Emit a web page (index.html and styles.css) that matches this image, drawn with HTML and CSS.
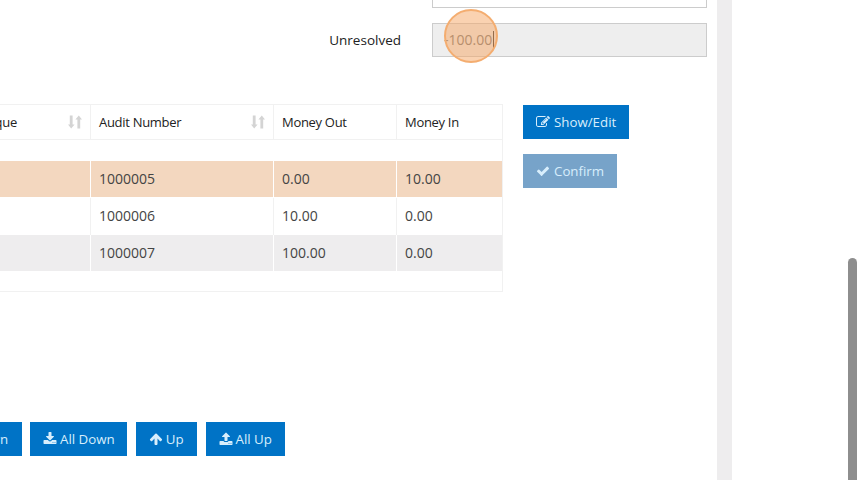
FILE: index.html
```html
<!DOCTYPE html>
<html lang="en">
<head>
<meta charset="utf-8">
<title>Reconciliation</title>
<link rel="stylesheet" href="styles.css">
</head>
<body>
<svg class="defs" width="0" height="0" aria-hidden="true">
  <symbol id="i-edit" viewBox="0 0 1792 1792"><path d="M888 1184l116-116-152-152-116 116v56h96v96h56zm440-720q-16-16-33 1l-350 350q-17 17-1 33t33-1l350-350q17-17 1-33zm80 594v190q0 119-84.500 203.500t-203.500 84.500h-832q-119 0-203.500-84.500t-84.500-203.500v-832q0-119 84.500-203.500t203.500-84.500h832q63 0 117 25 15 7 18 23 3 17-9 29l-49 49q-14 14-32 8-23-6-45-6h-832q-66 0-113 47t-47 113v832q0 66 47 113t113 47h832q66 0 113-47t47-113v-126q0-13 9-22l64-64q15-15 35-7t20 29zm-96-738l288 288-672 672h-288v-288zm444 132l-92 92-288-288 92-92q28-28 68-28t68 28l152 152q28 28 28 68t-28 68z"/></symbol>
  <symbol id="i-check" viewBox="0 0 1792 1792"><path d="M1671 566q0 40-28 68l-724 724-136 136q-28 28-68 28t-68-28l-136-136-362-362q-28-28-28-68t28-68l136-136q28-28 68-28t68 28l294 295 656-657q28-28 68-28t68 28l136 136q28 28 28 68z"/></symbol>
  <symbol id="i-down" viewBox="0 0 1792 1792"><path d="M1344 1344q0-26-19-45t-45-19-45 19-19 45 19 45 45 19 45-19 19-45zm256 0q0-26-19-45t-45-19-45 19-19 45 19 45 45 19 45-19 19-45zm128-224v320q0 40-28 68t-68 28h-1472q-40 0-68-28t-28-68v-320q0-40 28-68t68-28h465l135 136q58 56 136 56t136-56l136-136h464q40 0 68 28t28 68zm-325-569q17 41-14 70l-448 448q-18 19-45 19t-45-19l-448-448q-31-29-14-70 17-39 59-39h256v-448q0-26 19-45t45-19h256q26 0 45 19t19 45v448h256q42 0 59 39z"/></symbol>
  <symbol id="i-arrow-down" viewBox="0 0 1792 1792"><path d="M1675 832q0 53-37 90l-651 652q-39 37-91 37-53 0-90-37l-651-652q-38-36-38-90 0-53 38-91l74-75q39-37 91-37 53 0 90 37l294 294v-704q0-52 38-90t90-38h128q52 0 90 38t38 90v704l294-294q37-37 90-37 52 0 91 37l75 75q37 39 37 91z"/></symbol>
  <symbol id="i-arrow-up" viewBox="0 0 1792 1792"><path d="M1675 971q0 51-37 90l-75 75q-38 38-91 38-54 0-90-38l-294-293v704q0 52-37.500 84.500t-90.500 32.500h-128q-53 0-90.500-32.500t-37.500-84.500v-704l-294 293q-36 38-90 38t-90-38l-75-75q-38-38-38-90 0-53 38-91l651-651q35-37 90-37 54 0 91 37l651 651q37 39 37 91z"/></symbol>
  <symbol id="i-up" viewBox="0 0 1792 1792"><path d="M1344 1472q0-26-19-45t-45-19-45 19-19 45 19 45 45 19 45-19 19-45zm256 0q0-26-19-45t-45-19-45 19-19 45 19 45 45 19 45-19 19-45zm128-224v320q0 40-28 68t-68 28h-1472q-40 0-68-28t-28-68v-320q0-40 28-68t68-28h427q21 56 70.500 92t110.500 36h256q61 0 110.500-36t70.500-92h427q40 0 68 28t28 68zm-325-648q-17 40-59 40h-256v448q0 26-19 45t-45 19h-256q-26 0-45-19t-19-45v-448h-256q-42 0-59-40-17-39 14-69l448-448q18-19 45-19t45 19l448 448q31 30 14 69z"/></symbol>
  <symbol id="i-sort" viewBox="0 0 14 14"><path d="M1.800 0.500h2.800v9H6.600L3.200 13.500 0 9.500h1.800zM9.400 13.500v-9H7.400L10.800 0.500 14 4.500h-1.800v9z"/></symbol>
</svg>

<div class="page">
  <main class="panel">
    <div class="field field-first">
      <div class="input"></div>
    </div>
    <div class="field">
      <label class="field-label">Unresolved</label>
      <div class="input input-readonly">
        <span class="input-value">-100.00</span><span class="caret"></span>
        <span class="pulse"></span>
      </div>
    </div>

    <div class="table-row">
      <table class="grid">
        <colgroup>
          <col class="c-cheque"><col class="c-audit"><col class="c-out"><col class="c-in">
        </colgroup>
        <thead>
          <tr>
            <th><span class="th-inner">Cheque<svg class="sort"><use href="#i-sort"/></svg></span></th>
            <th><span class="th-inner">Audit Number<svg class="sort"><use href="#i-sort"/></svg></span></th>
            <th>Money Out</th>
            <th>Money In</th>
          </tr>
        </thead>
        <tbody>
          <tr class="spacer-top"><td colspan="4"></td></tr>
          <tr class="selected"><td></td><td>1000005</td><td>0.00</td><td>10.00</td></tr>
          <tr class="plain"><td></td><td>1000006</td><td>10.00</td><td>0.00</td></tr>
          <tr class="striped"><td></td><td>1000007</td><td>100.00</td><td>0.00</td></tr>
          <tr class="spacer-bottom"><td colspan="4"></td></tr>
        </tbody>
      </table>
      <div class="side-actions">
        <button class="btn" type="button"><svg class="icon"><use href="#i-edit"/></svg>Show/Edit</button>
        <button class="btn btn-muted" type="button"><svg class="icon"><use href="#i-check"/></svg>Confirm</button>
      </div>
    </div>

    <div class="move-actions">
      <button class="btn btn-m1" type="button"><svg class="icon"><use href="#i-arrow-down"/></svg>Down</button>
      <button class="btn btn-tight" type="button"><svg class="icon"><use href="#i-down"/></svg>All Down</button>
      <button class="btn" type="button"><svg class="icon"><use href="#i-arrow-up"/></svg>Up</button>
      <button class="btn" type="button"><svg class="icon"><use href="#i-up"/></svg>All Up</button>
    </div>
  </main>
  <div class="gutter"></div>
  <aside class="rail"><div class="scroll-thumb"></div></aside>
</div>
</body>
</html>
```
FILE: styles.css
```css
* { box-sizing: border-box; }
html, body { margin: 0; height: 480px; overflow: hidden; background: #fff; }
body { font-family: "Open Sans", sans-serif; font-size: 13.5px; color: #222; }
.defs { position: absolute; }

.page { display: flex; height: 480px; }
.panel { width: 717px; height: 480px; overflow: hidden; background: #fff; }
.gutter { width: 15px; background: #eeedee; }
.rail { flex: 1; display: flex; justify-content: flex-end; align-items: flex-start; padding-right: 3px; padding-top: 258px; background: #fff; }
.scroll-thumb { width: 9px; height: 240px; background: #8e8e8e; border-radius: 5px 5px 0 0; }

.field { display: flex; justify-content: flex-end; align-items: center; padding-right: 10px; margin-top: 15px; }
.field-first { margin-top: -26px; }
.field-label { margin-right: 31px; margin-bottom: 1px; font-size: 13.5px; color: #222; }
.input { position: relative; width: 275px; height: 34px; border: 1px solid #ccc; background: #fff; padding: 0 0 1px 11px; display: flex; align-items: center; }
.input-readonly { background: #eee; color: #777; font-size: 14px; }
.caret { width: 1px; height: 18px; background: #333; margin-left: 1px; }
.pulse { position: absolute; left: 11px; top: -15px; width: 54px; height: 54px; border-radius: 50%; background: rgba(245, 165, 100, 0.5); border: 2px solid #f4ad70; }

.table-row { display: flex; align-items: flex-start; margin-top: 47px; margin-left: -37px; }
.grid { width: 540px; flex: none; table-layout: fixed; border-collapse: separate; border-spacing: 0; border: 1px solid #f1f1f1; font-size: 14px; }
.c-cheque { width: 127px; }
.c-audit { width: 183px; }
.c-out { width: 123px; }
.c-in { width: 105px; }
.grid th { height: 35px; padding: 0 8px; font-size: 13px; letter-spacing: -0.3px; font-weight: 400; text-align: left; color: #222; border-right: 1px solid #f1f1f1; border-bottom: 1px solid #f1f1f1; }
.grid th:last-child, .grid td:last-child { border-right: 0; }
.th-inner { display: flex; justify-content: space-between; align-items: center; }
.sort { width: 14px; height: 14px; fill: #d4d4d4; }
.grid td { height: 37px; padding: 0 8px 1px; color: #444; border-right: 1px solid #f1f1f1; }
.grid .plain td { padding-bottom: 3px; }
.grid .spacer-top td { height: 21px; padding: 0; border-right: 0; }
.grid .spacer-bottom td { height: 19px; padding: 0; border-right: 0; }
.selected td { background: #f3d7bf; border-right-color: #fff; border-bottom: 1px solid #fff; }
.striped td { background: #eeedee; border-right-color: #fff; border-bottom: 1px solid #fff; }

.side-actions { display: flex; flex-direction: column; align-items: flex-start; gap: 15px; margin-left: 20px; margin-top: 1px; }
.btn { display: inline-flex; align-items: center; height: 34px; padding: 0 13px 1px 13px; border: 0; border-radius: 0; background: #0073c6; color: #d8eefc; font-family: inherit; font-size: 13.3px; white-space: nowrap; }
.btn-muted { background: #77a3c9; }
.icon { width: 14px; height: 14px; fill: currentColor; margin-right: 4px; }

.move-actions { display: flex; gap: 9px; margin-top: 130px; margin-left: -58px; }
.move-actions .icon { margin-right: 3px; }
.move-actions .btn-tight { padding-right: 12px; }
.move-actions .btn-m1 { flex: none; width: 80px; margin-right: -1px; }
```
